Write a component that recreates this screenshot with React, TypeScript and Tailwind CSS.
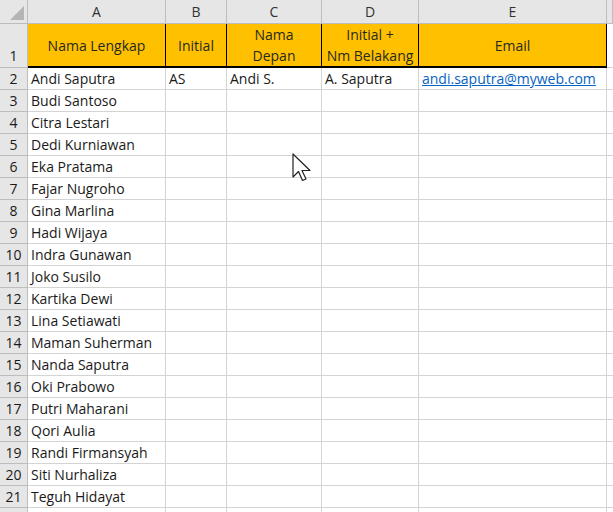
const names = [
  'Andi Saputra', 'Budi Santoso', 'Citra Lestari', 'Dedi Kurniawan', 'Eka Pratama', 'Fajar Nugroho',
  'Gina Marlina', 'Hadi Wijaya', 'Indra Gunawan', 'Joko Susilo', 'Kartika Dewi', 'Lina Setiawati',
  'Maman Suherman', 'Nanda Saputra', 'Oki Prabowo', 'Putri Maharani', 'Qori Aulia', 'Randi Firmansyah',
  'Siti Nurhaliza', 'Teguh Hidayat',
];

const cols = 'grid grid-cols-[28px_138px_61px_95px_97px_188px_1fr]';
const cell = 'border-r border-b border-[#d4d4d4] px-[3px] flex items-center overflow-hidden whitespace-nowrap';

export default function App() {
  return (
    <div className="relative w-[613px] h-[512px] overflow-hidden bg-white text-[14px] text-[#1a1a1a]" style={{ fontFamily: '"Open Sans", "Noto Sans", sans-serif' }}>
      <div className={`${cols} h-[24px] bg-[#e6e6e6] text-[#333]`}>
        <div className="border-r border-b border-[#bdbdbd] relative">
          <svg className="absolute right-[3px] bottom-[3px]" width="14" height="14"><polygon points="14,0 14,14 0,14" fill="#b5b5b5" /></svg>
        </div>
        {['A', 'B', 'C', 'D', 'E', ''].map((c, i) => (
          <div key={i} className="border-r border-b border-[#bdbdbd] flex items-center justify-center">{c}</div>
        ))}
      </div>
      <div className={`${cols} h-[44px]`}>
        <div className="bg-[#e6e6e6] border-r border-b border-[#bdbdbd] flex items-end justify-center pb-[1px]">1</div>
        {['Nama Lengkap', 'Initial', 'Nama\nDepan', 'Initial +\nNm Belakang', 'Email'].map((t, i) => (
          <div key={i} className="bg-[#ffc000] border-r border-b-2 border-black flex items-center justify-center text-center leading-[21px] whitespace-pre text-[#1f2a1f]">{t}</div>
        ))}
        <div className="border-b border-[#d4d4d4]" />
      </div>
      {names.map((n, i) => (
        <div key={n} className={`${cols} h-[22px]`}>
          <div className="bg-[#e6e6e6] border-r border-b border-[#bdbdbd] flex items-center justify-center">{i + 2}</div>
          <div className={cell}>{n}</div>
          <div className={cell}>{i === 0 ? 'AS' : ''}</div>
          <div className={cell}>{i === 0 ? 'Andi S.' : ''}</div>
          <div className={cell}>{i === 0 ? 'A. Saputra' : ''}</div>
          <div className={cell}>{i === 0 ? <span className="text-[#0563c1] underline">andi.saputra@myweb.com</span> : ''}</div>
          <div className="border-b border-[#d4d4d4]" />
        </div>
      ))}
      <div className={`${cols} h-[22px]`}>
        <div className="bg-[#e6e6e6] border-r border-[#bdbdbd]" />
        {[0, 1, 2, 3, 4].map((k) => <div key={k} className="border-r border-[#d4d4d4]" />)}
      </div>
      <svg className="absolute left-[292px] top-[153px]" width="22" height="30" viewBox="0 0 22 30">
        <path d="M1 1 L1 24 L6.5 18.5 L10.5 27.5 L14 26 L10 17.5 L18 17.5 Z" fill="white" stroke="#222" strokeWidth="1.2" strokeLinejoin="round" />
      </svg>
    </div>
  );
}
